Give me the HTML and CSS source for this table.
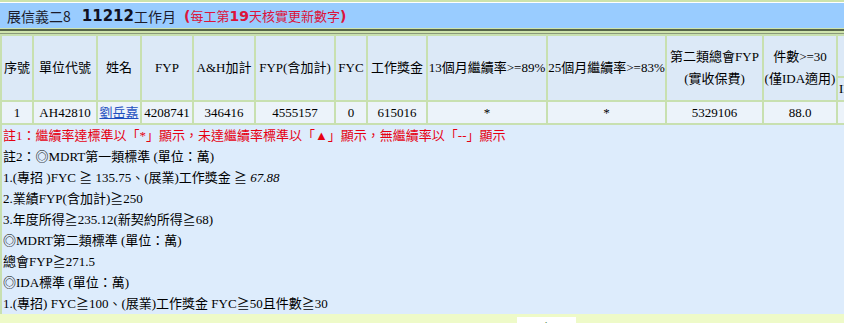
FILE: index.html
```html
<!DOCTYPE html>
<html lang="zh-Hant">
<head>
<meta charset="utf-8">
<title>工作月報表</title>
<link rel="stylesheet" href="styles.css">
</head>
<body>
<div class="page">
  <div class="top-strip"></div>
  <div class="title-bar">
    <span class="unit">展信義二8</span>
    <b class="month">11212</b><span>工作月</span>
    <span class="hint"><b>(</b>每工第<b class="day">19</b>天核實更新數字<b>)</b></span>
  </div>
  <div class="title-sep"></div>
  <table class="report">
    <colgroup>
      <col class="c30"><col class="c62"><col class="c42"><col class="c50"><col class="c60"><col class="c78"><col class="c30"><col class="c58"><col class="c118"><col class="c117"><col class="c95"><col class="c72"><col class="c125"><col class="c126">
    </colgroup>
    <thead>
      <tr class="h1">
        <th rowspan="2">序號</th>
        <th rowspan="2">單位代號</th>
        <th rowspan="2">姓名</th>
        <th rowspan="2">FYP</th>
        <th rowspan="2">A&amp;H加計</th>
        <th rowspan="2">FYP(含加計)</th>
        <th rowspan="2">FYC</th>
        <th rowspan="2">工作獎金</th>
        <th rowspan="2">13個月繼續率&gt;=89%</th>
        <th rowspan="2">25個月繼續率&gt;=83%</th>
        <th rowspan="2">第二類總會FYP<br>(實收保費)</th>
        <th rowspan="2">件數&gt;=30<br>(僅IDA適用)</th>
        <th colspan="2">IDA標準</th>
      </tr>
      <tr class="h2">
        <th class="sub">IDA工作獎金</th>
        <th class="sub">IDA件數</th>
      </tr>
    </thead>
    <tbody>
      <tr class="row">
        <td>1</td>
        <td>AH42810</td>
        <td><a class="name" href="#">劉岳嘉</a></td>
        <td>4208741</td>
        <td>346416</td>
        <td>4555157</td>
        <td>0</td>
        <td>615016</td>
        <td>*</td>
        <td>*</td>
        <td>5329106</td>
        <td>88.0</td>
        <td>*</td>
        <td>*</td>
      </tr>
    </tbody>
  </table>
  <div class="notes">
    <div class="note-red">註1：繼續率達標準以「*」顯示，未達繼續率標準以「▲」顯示，無繼續率以「--」顯示</div>
    <div>註2：◎MDRT第一類標準 (單位：萬)</div>
    <div>1.(專招 )FYC ≧ 135.75、(展業)工作獎金 ≧ <i>67.88</i></div>
    <div>2.業績FYP(含加計)≧250</div>
    <div>3.年度所得≧235.12(新契約所得≧68)</div>
    <div>◎MDRT第二類標準 (單位：萬)</div>
    <div>總會FYP≧271.5</div>
    <div>◎IDA標準 (單位：萬)</div>
    <div>1.(專招) FYC≧100、(展業)工作獎金 FYC≧50且件數≧30</div>
  </div>
  <div class="footer">
    <a class="back" href="#">回上頁</a>
  </div>
</div>
</body>
</html>
```
FILE: styles.css
```css
html {
  overflow: hidden;
}
body {
  margin: 0;
  background: #eefac8;
  font-family: "Liberation Serif", "Noto Sans CJK TC", serif;
  font-size: 13px;
  color: #000;
}
.page {
  width: 1093px;
}
.top-strip {
  height: 2px;
  background: #cde3ad;
}
.title-bar {
  height: 25px;
  border-top: 1px solid #ffffff;
  background: #99ccff;
  display: flex;
  align-items: center;
  padding-left: 7px;
  font-family: "Noto Sans CJK TC", sans-serif;
  font-size: 14px;
  color: #1c1c2c;
}
.title-bar .unit {
  margin-right: 11px;
}
.title-bar .month {
  font-family: "DejaVu Sans", sans-serif;
  font-size: 15px;
  font-weight: bold;
  color: #111122;
}
.title-bar .hint {
  margin-left: 8px;
  color: #dc143c;
  font-size: 13px;
}
.title-bar .hint b {
  font-family: "DejaVu Sans", sans-serif;
  font-size: 14px;
}
.title-sep {
  height: 6px;
  background: linear-gradient(#cfe4ad 0 1px, #56664a 1px 3px, #cfe4ad 3px 5px, #8a9a7a 5px 6px);
}
.report {
  table-layout: fixed;
  width: 1093px;
  border-spacing: 2px;
  background: #c8e0b0;
}
.c30 { width: 30px; }
.c42 { width: 42px; }
.c50 { width: 50px; }
.c58 { width: 58px; }
.c60 { width: 60px; }
.c62 { width: 62px; }
.c72 { width: 72px; }
.c78 { width: 78px; }
.c95 { width: 95px; }
.c117 { width: 117px; }
.c118 { width: 118px; }
.c125 { width: 125px; }
.c126 { width: 126px; }
.report th,
.report td {
  padding: 0;
  text-align: center;
  vertical-align: middle;
  white-space: nowrap;
  overflow: hidden;
}
.report th {
  background: #dce9f7;
  font-weight: normal;
  line-height: 22px;
}
.report th.sub {
  text-align: left;
  padding-left: 1px;
}
.h1 { height: 40px; }
.h2 { height: 22px; }
.row { height: 21px; }
.report td {
  background: #ecf3fa;
  line-height: 21px;
}
.name {
  color: #1f4fbf;
  text-decoration: underline;
}
.notes {
  background: #ddecfc;
  border-left: 2px solid #c8e0b0;
  padding-left: 1px;
  line-height: 21px;
}
.note-red {
  color: #e60012;
}
.footer {
  padding-top: 3px;
  text-align: center;
}
.back {
  display: inline-block;
  width: 59px;
  height: 22px;
  line-height: 22px;
  background: #ffffff;
  color: #1d5e1d;
  text-decoration: none;
  font-family: "Noto Sans CJK TC", sans-serif;
}
```
